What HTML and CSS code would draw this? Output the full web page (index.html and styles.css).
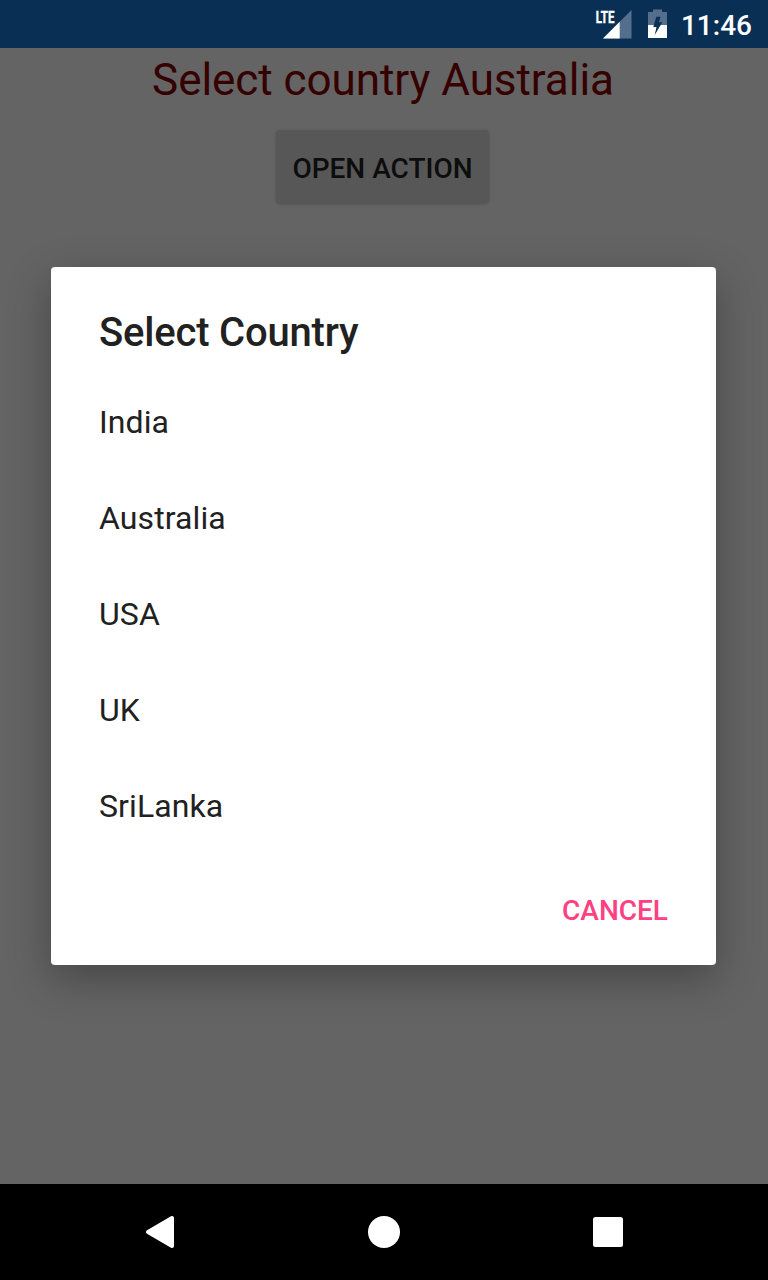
FILE: index.html
```html
<!DOCTYPE html>
<html lang="en">
<head>
<meta charset="utf-8">
<title>Select Country</title>
<link rel="stylesheet" href="styles.css">
</head>
<body>
<div class="screen">
  <header class="status-bar">
    <svg class="signal" width="38" height="32" viewBox="0 0 38 32" aria-hidden="true">
      <path d="M37.5 2V30.5H9Z" fill="#546f8d"/>
      <path d="M25.7 13.8V30.5H9Z" fill="#fff"/>
      <text class="network" x="1.8" y="14.7" textLength="18.6" lengthAdjust="spacingAndGlyphs">LTE</text>
    </svg>
    <svg class="battery" width="20" height="30" viewBox="0 0 20 30" aria-hidden="true">
      <path d="M6 0.5H15V3H20V16H1V3H6Z" fill="#546f8d"/>
      <path d="M1 16H20V29H1Z" fill="#fff"/>
      <path d="M9.3 7.7H13.5L12 13.3H15.3L7.7 26L9.5 18H6.3Z" fill="#0a2f54"/>
    </svg>
    <time class="clock">11:46</time>
  </header>
  <main class="content">
    <h1 class="result">Select country Australia</h1>
    <button class="open">OPEN ACTION</button>
    <section class="dialog" role="dialog" aria-labelledby="dialog-title">
      <h2 class="title" id="dialog-title">Select Country</h2>
      <ul class="options">
        <li class="option">India</li>
        <li class="option">Australia</li>
        <li class="option">USA</li>
        <li class="option">UK</li>
        <li class="option">SriLanka</li>
      </ul>
      <div class="actions"><button class="cancel">CANCEL</button></div>
    </section>
  </main>
  <nav class="nav-bar">
    <svg width="32" height="36" viewBox="0 0 32 36" aria-hidden="true"><path d="M28 4V32L4 18Z" fill="#fff" stroke="#fff" stroke-width="4" stroke-linejoin="round"/></svg>
    <svg width="32" height="32" viewBox="0 0 32 32" aria-hidden="true"><circle cx="16" cy="16" r="16" fill="#fff"/></svg>
    <svg width="32" height="30" viewBox="0 0 32 30" aria-hidden="true"><rect x="1" width="30" height="30" rx="2.5" fill="#fff"/></svg>
  </nav>
</div>
</body>
</html>
```
FILE: styles.css
```css
* { box-sizing: border-box; }
body { margin: 0; font-family: Roboto, sans-serif; }
h1, h2, ul { margin: 0; padding: 0; }
button { border: 0; font: 500 28px/32px Roboto, sans-serif; }
.screen { display: flex; flex-direction: column; width: 768px; height: 1280px; background: #646464; overflow: hidden; }
.status-bar { display: flex; height: 48px; padding: 8px 16px 0 594px; background: #0a2f54; color: #fff; }
.network { fill: #fff; stroke: #fff; stroke-width: .4px; font: 700 16.5px Roboto, sans-serif; }
.battery { margin: 1px 0 0 15px; }
.clock { margin-left: auto; font-size: 28px; font-weight: 500; line-height: 36px; white-space: nowrap; }
.content { display: flex; flex: 1; flex-direction: column; align-items: center; padding-right: 1px; }
.result { height: 64px; color: #340000; font-size: 44px; font-weight: 400; line-height: 64px; letter-spacing: -.05px; margin-right: 1px; white-space: nowrap; }
.open { width: 213px; height: 73px; margin: 18px 2px 64px 0; padding: 4px 0 0; border-radius: 4px; background: #575757; color: #0d0d0d; box-shadow: 0 1px 3px #0003; white-space: nowrap; }
.dialog { width: 665px; height: 698px; padding: 37px 48px 0; border-radius: 4px; background: #fff; color: #212121; box-shadow: 0 14px 44px #0000004d; }
.title { height: 70px; font-size: 40px; font-weight: 500; line-height: 58px; letter-spacing: -.2px; }
.options { list-style: none; }
.option { height: 96px; font-size: 32px; line-height: 96px; letter-spacing: .1px; }
.actions { display: flex; justify-content: flex-end; padding-top: 41px; }
.cancel { padding: 0; background: none; color: #ff4081; }
.nav-bar { display: flex; align-items: center; justify-content: space-between; height: 96px; padding: 0 144px; background: #000; }
```
